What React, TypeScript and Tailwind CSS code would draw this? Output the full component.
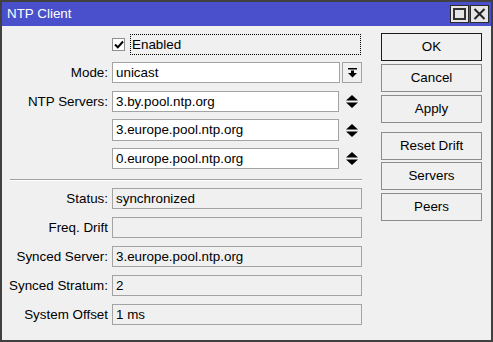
import React from "react";

const font = { fontFamily: '"Liberation Sans", Arial, sans-serif' };

function Label({ text, extra = "" }: { text: string; extra?: string }) {
  return (
    <div className={`w-[106px] shrink-0 text-right whitespace-nowrap ${extra}`}>{text}</div>
  );
}

function UpDown() {
  return (
    <svg width="12" height="13" viewBox="0 0 12 13" className="ml-[7px] shrink-0">
      <polygon points="6,0 12,5.5 0,5.5" fill="#000" />
      <polygon points="0,7.5 12,7.5 6,13" fill="#000" />
    </svg>
  );
}

function Btn({ label, primary = false, cls = "" }: { label: string; primary?: boolean; cls?: string }) {
  return (
    <div
      className={`h-[28px] w-[101px] flex items-center justify-center bg-[#f0f0f0] border ${
        primary ? "border-[#1b1b1b]" : "border-[#8c8c8c]"
      } ${cls}`}
    >
      {label}
    </div>
  );
}

export default function App() {
  return (
    <div
      className="w-[493px] h-[342px] bg-[#f0f0f0] border-2 border-[#404040] flex flex-col text-[13.4px] text-black leading-none overflow-hidden"
      style={font}
    >
      {/* Title bar */}
      <div className="h-[24px] shrink-0 bg-[#4a4fcc] flex items-center pl-[5px] pr-[2px] text-white">
        <span className="flex-1">NTP Client</span>
        <div className="w-[19px] h-[18px] bg-[#e6e6e6] border border-[#2a2a2a] flex items-center justify-center">
          <div className="w-[13px] h-[12px] border-2 border-[#333] border-t-[2px]" />
        </div>
        <div className="w-[19px] h-[18px] ml-[1px] bg-[#e6e6e6] border border-[#2a2a2a] flex items-center justify-center">
          <svg width="13" height="12" viewBox="0 0 13 12">
            <path d="M1.5 1 L11.5 11 M11.5 1 L1.5 11" stroke="#222" strokeWidth="2" />
          </svg>
        </div>
      </div>

      {/* Body */}
      <div className="flex flex-row flex-1">
        {/* Left column */}
        <div className="w-[360px] shrink-0 flex flex-col pt-[8px]">
          {/* Enabled */}
          <div className="h-[21px] flex items-center pl-[110px]">
            <div className="w-[13px] h-[13px] bg-white border border-[#8e8e8e] flex items-center justify-center">
              <svg width="10" height="9" viewBox="0 0 10 9">
                <path d="M1 4.5 L3.8 7.3 L9 1.5" stroke="#000" strokeWidth="2" fill="none" />
              </svg>
            </div>
            <div className="ml-[5px] w-[231px] h-[21px] border border-dotted border-black flex items-center pl-[1px]">
              Enabled
            </div>
          </div>

          {/* Mode */}
          <div className="h-[21px] mt-[7px] flex items-center">
            <Label text="Mode:" />
            <div className="ml-[4px] w-[228px] h-[21px] bg-white border border-[#a3a3a3] flex items-center pl-[3px]">
              unicast
            </div>
            <div className="ml-[2px] w-[20px] h-[21px] bg-[#f0f0f0] border border-[#a3a3a3] flex items-center justify-center">
              <svg width="9" height="10" viewBox="0 0 9 10">
                <rect x="0" y="0" width="9" height="1.5" fill="#000" />
                <rect x="3" y="2.5" width="3" height="3" fill="#000" />
                <polygon points="0,5 9,5 4.5,9.5" fill="#000" />
              </svg>
            </div>
          </div>

          {/* NTP Servers */}
          <div className="h-[21px] mt-[8px] flex items-center">
            <Label text="NTP Servers:" />
            <div className="ml-[4px] w-[227px] h-[21px] bg-white border border-[#a3a3a3] flex items-center pl-[3px]">
              3.by.pool.ntp.org
            </div>
            <UpDown />
          </div>
          <div className="h-[22px] mt-[7px] flex items-center">
            <div className="w-[106px] shrink-0" />
            <div className="ml-[4px] w-[227px] h-[22px] bg-white border border-[#a3a3a3] flex items-center pl-[3px]">
              3.europe.pool.ntp.org
            </div>
            <UpDown />
          </div>
          <div className="h-[21px] mt-[7px] flex items-center">
            <div className="w-[106px] shrink-0" />
            <div className="ml-[4px] w-[227px] h-[21px] bg-white border border-[#a3a3a3] flex items-center pl-[3px]">
              0.europe.pool.ntp.org
            </div>
            <UpDown />
          </div>

          {/* Separator */}
          <div className="ml-[8px] mt-[10px] w-[352px] h-[2px] border-t border-[#a0a0a0] border-b border-b-white" />

          {/* Read-only rows */}
          {[
            { l: "Status:", v: "synchronized", mt: "mt-[7px]" },
            { l: "Freq. Drift", v: "", mt: "mt-[8px]", extra: "mr-[-2px] pr-0" },
            { l: "Synced Server:", v: "3.europe.pool.ntp.org", mt: "mt-[8px]" },
            { l: "Synced Stratum:", v: "2", mt: "mt-[8px]" },
            { l: "System Offset", v: "1 ms", mt: "mt-[8px]", extra: "mr-[-2px]" },
          ].map((r) => (
            <div key={r.l} className={`h-[21px] ${r.mt} flex items-center`}>
              <Label text={r.l} extra={r.extra || ""} />
              <div
                className={`${r.extra ? "ml-[6px]" : "ml-[4px]"} w-[250px] h-[21px] bg-[#f0f0f0] border border-[#a3a3a3] flex items-center pl-[3px]`}
              >
                {r.v}
              </div>
            </div>
          ))}
        </div>

        {/* Right column */}
        <div className="ml-[19px] flex flex-col pt-[7px]">
          <Btn label="OK" primary />
          <Btn label="Cancel" cls="mt-[3px]" />
          <Btn label="Apply" cls="mt-[3px]" />
          <Btn label="Reset Drift" cls="mt-[9px]" />
          <Btn label="Servers" cls="mt-[2px]" />
          <Btn label="Peers" cls="mt-[3px]" />
        </div>
      </div>
    </div>
  );
}
